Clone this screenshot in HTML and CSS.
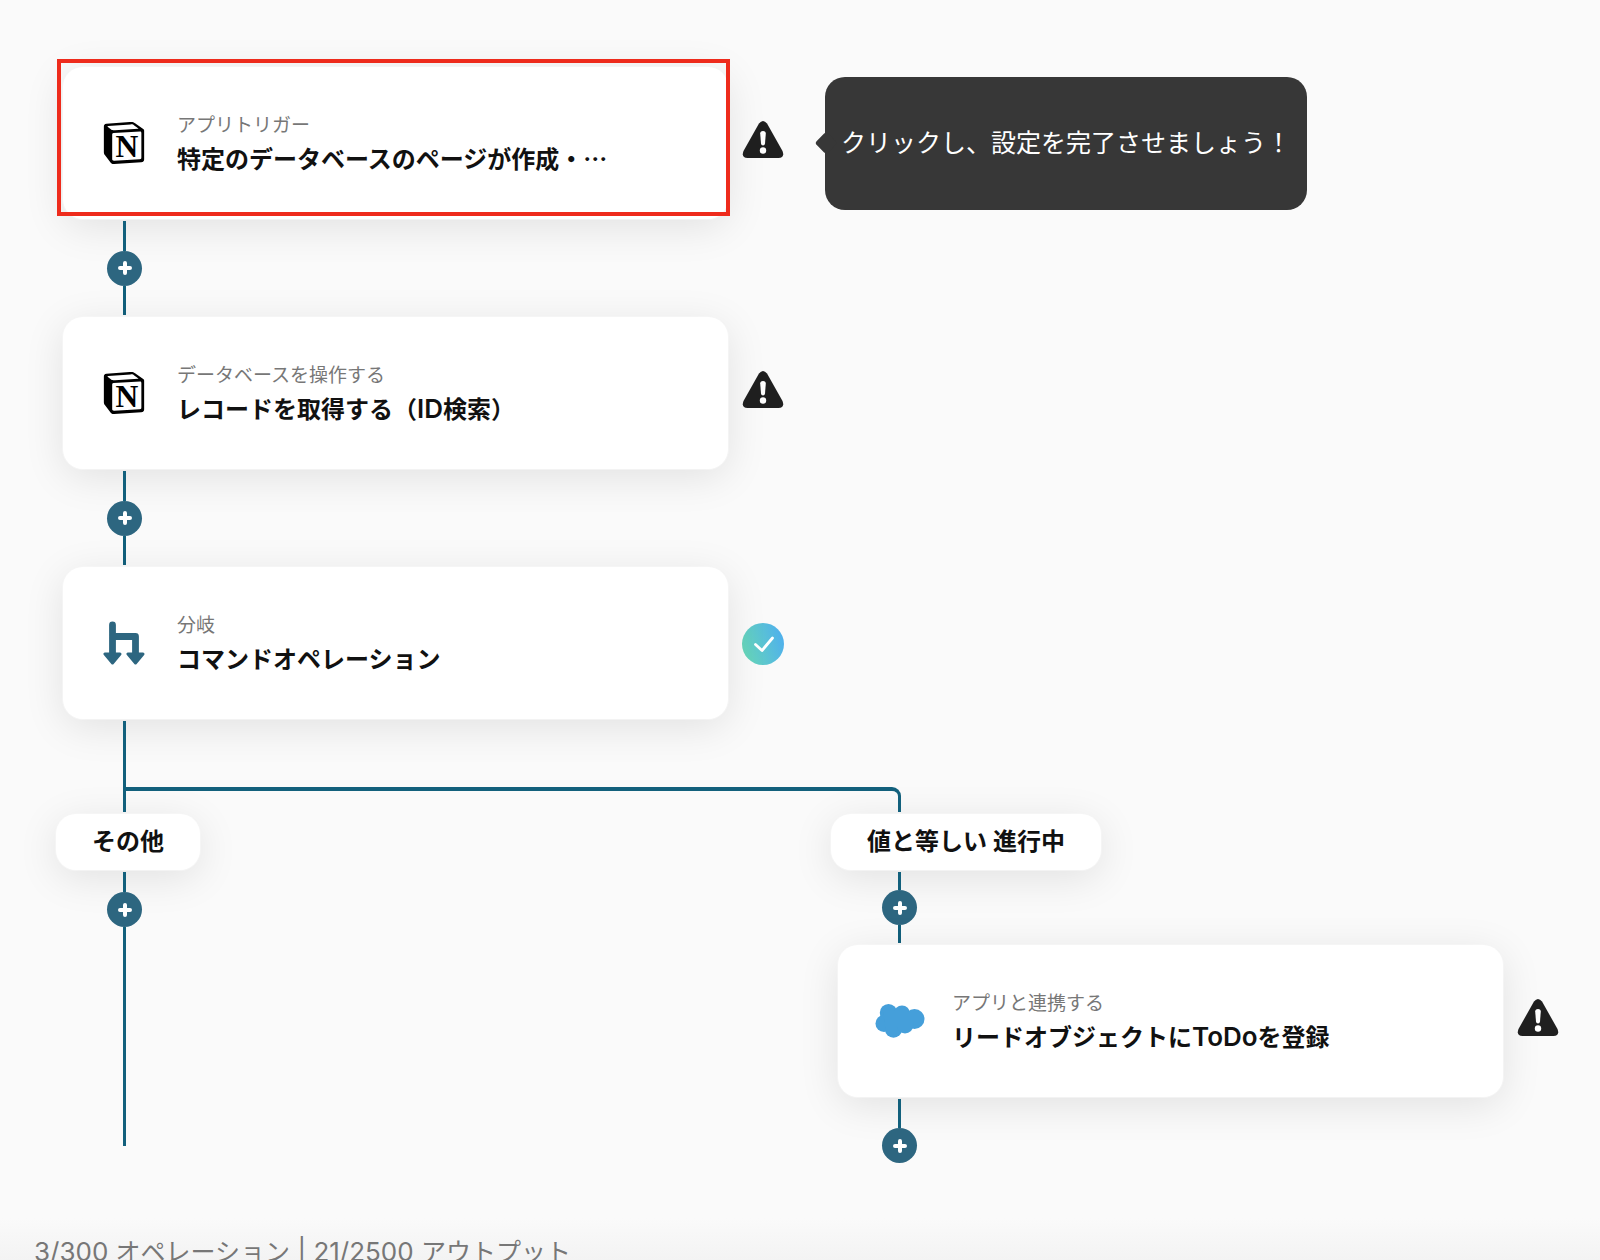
FILE: index.html
```
<!DOCTYPE html>
<html lang="ja">

<head>
    <meta charset="UTF-8">
    <meta name="viewport" content="width=device-width, initial-scale=1.0">
    <title>フローボット</title>
    <link rel="stylesheet" href="styles.css">
</head>

<body>
    <!-- Shared icons -->
    <svg class="icon-defs" aria-hidden="true">
        <symbol id="icon-box" viewBox="0 0 24 24">
            <path fill-rule="evenodd" d="M4.459 4.208c.746.606 1.026.56 2.428.466l13.215-.793c.28 0 .047-.28-.046-.326L17.86 1.968c-.42-.326-.981-.7-2.055-.607L3.01 2.295c-.466.046-.56.28-.374.466zm.793 3.08v13.904c0 .747.373 1.027 1.214.98l14.523-.84c.841-.046.935-.56.935-1.167V6.354c0-.606-.233-.933-.748-.887l-15.177.887c-.56.047-.747.327-.747.933zM1.936 1.035l13.31-.98c1.634-.14 2.055-.047 3.082.7l4.249 2.986c.7.513.934.653.934 1.213v16.378c0 1.026-.373 1.634-1.68 1.726l-15.458.934c-.98.047-1.448-.093-1.962-.747l-3.129-4.06c-.56-.747-.793-1.306-.793-1.96V2.667c0-.839.374-1.54 1.447-1.632z"/>
        </symbol>
        <symbol id="icon-plus" viewBox="0 0 16 16">
            <path d="M8 3v10M3 8h10" fill="none" stroke="#fff" stroke-width="4" stroke-linecap="round"/>
        </symbol>
        <symbol id="icon-warning" viewBox="0 0 42 44">
            <path d="M17 2.5Q21-2.5 25 2.5L40.5 30Q43 36.5 36.5 37H5.500Q-1 36.500 1.500 30Z" fill="#202020"/>
            <path d="M18.200 12.500Q18.200 10 21 10Q23.800 10 23.800 12.500L23 22.500Q22.800 24.500 21 24.500Q19.200 24.500 19 22.500Z" fill="#fff"/>
            <circle cx="21" cy="29.500" r="3.200" fill="#fff"/>
        </symbol>
    </svg>

    <main class="flow">
        <div class="row">
            <div class="step">
                <button class="card selected">
                    <svg class="card-icon" viewBox="0 0 24 24">
                        <use href="#icon-box"/>
                        <text class="notion-letter" x="13.7" y="20" text-anchor="middle">N</text>
                    </svg>
                    <span class="card-text">
                        <span class="card-label">アプリトリガー</span>
                        <span class="card-title">特定のデータベースのページが作成・<span class="dots">…</span></span>
                    </span>
                </button>
                <svg class="status" role="img" aria-label="未設定"><use href="#icon-warning"/></svg>
            </div>
            <div class="tooltip" role="tooltip">クリックし、設定を完了させましょう！</div>
        </div>

        <div class="connector">
            <span class="line"></span>
            <button class="add" aria-label="追加"><svg><use href="#icon-plus"/></svg></button>
            <span class="line"></span>
        </div>

        <div class="row">
            <div class="step">
                <button class="card">
                    <svg class="card-icon" viewBox="0 0 24 24">
                        <use href="#icon-box"/>
                        <text class="notion-letter" x="13.7" y="20" text-anchor="middle">N</text>
                    </svg>
                    <span class="card-text">
                        <span class="card-label">データベースを操作する</span>
                        <span class="card-title">レコードを取得する（<span class="latin">ID</span>検索）</span>
                    </span>
                </button>
                <svg class="status" role="img" aria-label="未設定"><use href="#icon-warning"/></svg>
            </div>
        </div>

        <div class="connector">
            <span class="line"></span>
            <button class="add" aria-label="追加"><svg><use href="#icon-plus"/></svg></button>
            <span class="line"></span>
        </div>

        <div class="row">
            <div class="step">
                <button class="card">
                    <svg class="card-icon" viewBox="0 0 42 44">
                        <path d="M9.500 4v30M9.500 15.500h23v18" fill="none" stroke="#2d6680" stroke-width="6.800" stroke-linecap="round" stroke-linejoin="round"/>
                        <path d="M2 33h15L9.500 42ZM25 33h15L32.500 42Z" fill="#2d6680" stroke="#2d6680" stroke-width="3" stroke-linejoin="round"/>
                    </svg>
                    <span class="card-text">
                        <span class="card-label">分岐</span>
                        <span class="card-title">コマンドオペレーション</span>
                    </span>
                </button>
                <svg class="status" viewBox="0 0 42 44" role="img" aria-label="設定済み">
                    <defs>
                        <linearGradient id="done" x1="0" y1="0.7" x2="1" y2="0.4">
                            <stop offset="0" stop-color="#68d8b8"/>
                            <stop offset="1" stop-color="#4fb0ec"/>
                        </linearGradient>
                    </defs>
                    <circle cx="21" cy="23" r="21" fill="url(#done)"/>
                    <path d="M13.500 23.500l6.500 6L30.500 17" fill="none" stroke="#fff" stroke-width="2.800" stroke-linecap="round" stroke-linejoin="round"/>
                </svg>
            </div>
        </div>

        <!-- Fork into two branches -->
        <div class="fork">
            <span class="stem"></span>
            <span class="elbow"></span>
        </div>

        <div class="row">
            <div class="branch">
                <div class="condition">その他</div>
                <div class="connector tail">
                    <span class="line"></span>
                    <button class="add" aria-label="追加"><svg><use href="#icon-plus"/></svg></button>
                    <span class="line"></span>
                </div>
            </div>

            <div class="branch">
                <div class="condition">値と等しい 進行中</div>
                <div class="connector short">
                    <span class="line"></span>
                    <button class="add" aria-label="追加"><svg><use href="#icon-plus"/></svg></button>
                    <span class="line"></span>
                </div>
                <div class="step">
                    <button class="card">
                        <svg class="card-icon cloud" viewBox="0 0 50 34" fill="#459fda">
                            <circle cx="13.500" cy="8.700" r="8.700"/>
                            <circle cx="27" cy="9.500" r="8"/>
                            <circle cx="39.500" cy="15" r="10"/>
                            <circle cx="9" cy="19.500" r="8.500"/>
                            <circle cx="18.500" cy="25.200" r="8.500"/>
                            <circle cx="30" cy="21" r="8.500"/>
                            <path d="M8 8h30v14H10z"/>
                        </svg>
                        <span class="card-text">
                            <span class="card-label">アプリと連携する</span>
                            <span class="card-title">リードオブジェクトに<span class="latin">ToDo</span>を登録</span>
                        </span>
                    </button>
                    <svg class="status" role="img" aria-label="未設定"><use href="#icon-warning"/></svg>
                </div>
                <div class="connector end">
                    <span class="line"></span>
                    <button class="add" aria-label="追加"><svg><use href="#icon-plus"/></svg></button>
                </div>
            </div>
        </div>
    </main>

    <footer class="usage"><span class="latin">3/300 </span>オペレーション<span class="latin"> | 21/2500 </span>アウトプット</footer>
</body>

</html>
```
FILE: styles.css
```
* {
    margin: 0;
    padding: 0;
    box-sizing: border-box;
}

body {
    display: flex;
    flex-direction: column;
    height: 100vh;
    overflow: hidden;
    background: #fafafa;
    color: #111;
    font-family: 'Inter', 'Noto Sans CJK JP', sans-serif;
    font-size: 24px;
}

button {
    border: none;
    font: inherit;
    color: inherit;
    cursor: pointer;
}

.icon-defs {
    position: absolute;
    width: 0;
    height: 0;
}

.flow {
    flex: none;
    padding: 67px 0 0 50px;
}

.row {
    display: grid;
    grid-template-columns: 1fr 1fr;
}

/* Step cards */
.step {
    display: flex;
    align-items: center;
    gap: 14px;
    padding: 0 41px 0 13px;
}

.card {
    position: relative;
    flex: 1;
    display: flex;
    align-items: center;
    gap: 32px;
    padding: 42px 40px;
    background: #fff;
    border-radius: 20px;
    box-shadow: 0 0 0 1px rgba(246, 246, 246, 0.7), 0 8px 40px rgba(0, 0, 0, 0.1);
    text-align: left;
}

.card.selected::after {
    content: '';
    position: absolute;
    top: -8px;
    right: -2px;
    bottom: 3px;
    left: -6px;
    border: 4px solid #ee2b1c;
}

.card-icon {
    flex: none;
    width: 42px;
    height: 44px;
}

.card-icon.cloud {
    width: 50px;
    margin: 0 -5px 0 -3px;
}

.notion-letter {
    font-family: 'Liberation Serif', serif;
    font-size: 18px;
    font-weight: bold;
}

.card-text {
    display: flex;
    flex-direction: column;
}

.card-label {
    font-size: 19px;
    line-height: 34px;
    color: #777;
}

.card-title {
    height: 34px;
    line-height: 34px;
    font-weight: 600;
}

.dots {
    font-family: 'Noto Sans CJK JP', sans-serif;
    line-height: 1;
}

.latin {
    font-size: 26px;
    line-height: 1;
}

.status {
    flex: none;
    width: 42px;
    height: 44px;
}

.tooltip {
    position: relative;
    justify-self: start;
    align-self: center;
    padding: 48px 16px 49px;
    background: #373737;
    border-radius: 20px;
    color: #fff;
    font-size: 25px;
    line-height: 36px;
    white-space: nowrap;
}

.tooltip::before {
    content: '';
    position: absolute;
    top: 50%;
    left: -7px;
    width: 16px;
    height: 16px;
    margin-top: -8px;
    background: #373737;
    border-radius: 3px;
    transform: rotate(45deg);
}

/* Lines between the steps */
.connector {
    position: relative;
    display: flex;
    flex-direction: column;
    align-items: center;
    width: 35px;
    height: 98px;
    margin-left: 57px;
    padding: 2px 0;
}

.line {
    flex: 1;
    width: 3px;
    background: #12607c;
}

.add {
    display: flex;
    align-items: center;
    justify-content: center;
    width: 35px;
    height: 35px;
    background: #2d6680;
    border-radius: 50%;
}

.add svg {
    width: 16px;
    height: 16px;
}

.connector.tail {
    height: 276px;
    padding-bottom: 0;
}

.connector.tail .line:first-child {
    flex: none;
    height: 20px;
}

.connector.short {
    height: 75px;
}

.connector.end {
    height: 66px;
    padding-bottom: 0;
}

.fork {
    position: relative;
    display: flex;
    align-items: flex-end;
    height: 95px;
    padding: 2px 0;
}

.stem {
    flex: none;
    align-self: stretch;
    width: 3px;
    margin-left: 73px;
    background: #12607c;
}

.elbow {
    flex: none;
    width: 50%;
    height: 25px;
    border: solid #12607c;
    border-width: 4px 3px 0 0;
    border-top-right-radius: 9px;
}

.condition {
    width: fit-content;
    margin-left: 6px;
    padding: 10px 36px;
    background: #fff;
    border-radius: 20px;
    box-shadow: 0 0 0 1px rgba(246, 246, 246, 0.7), 0 8px 40px rgba(0, 0, 0, 0.1);
    font-weight: 600;
    line-height: 36px;
}

/* Usage bar */
.usage {
    flex: none;
    margin-top: auto;
    height: 42px;
    padding: 16px 34px 0;
    background: linear-gradient(#fafafa, #f3f3f3);
    color: #777;
    font-size: 25px;
    line-height: 36px;
    white-space: nowrap;
}
```
